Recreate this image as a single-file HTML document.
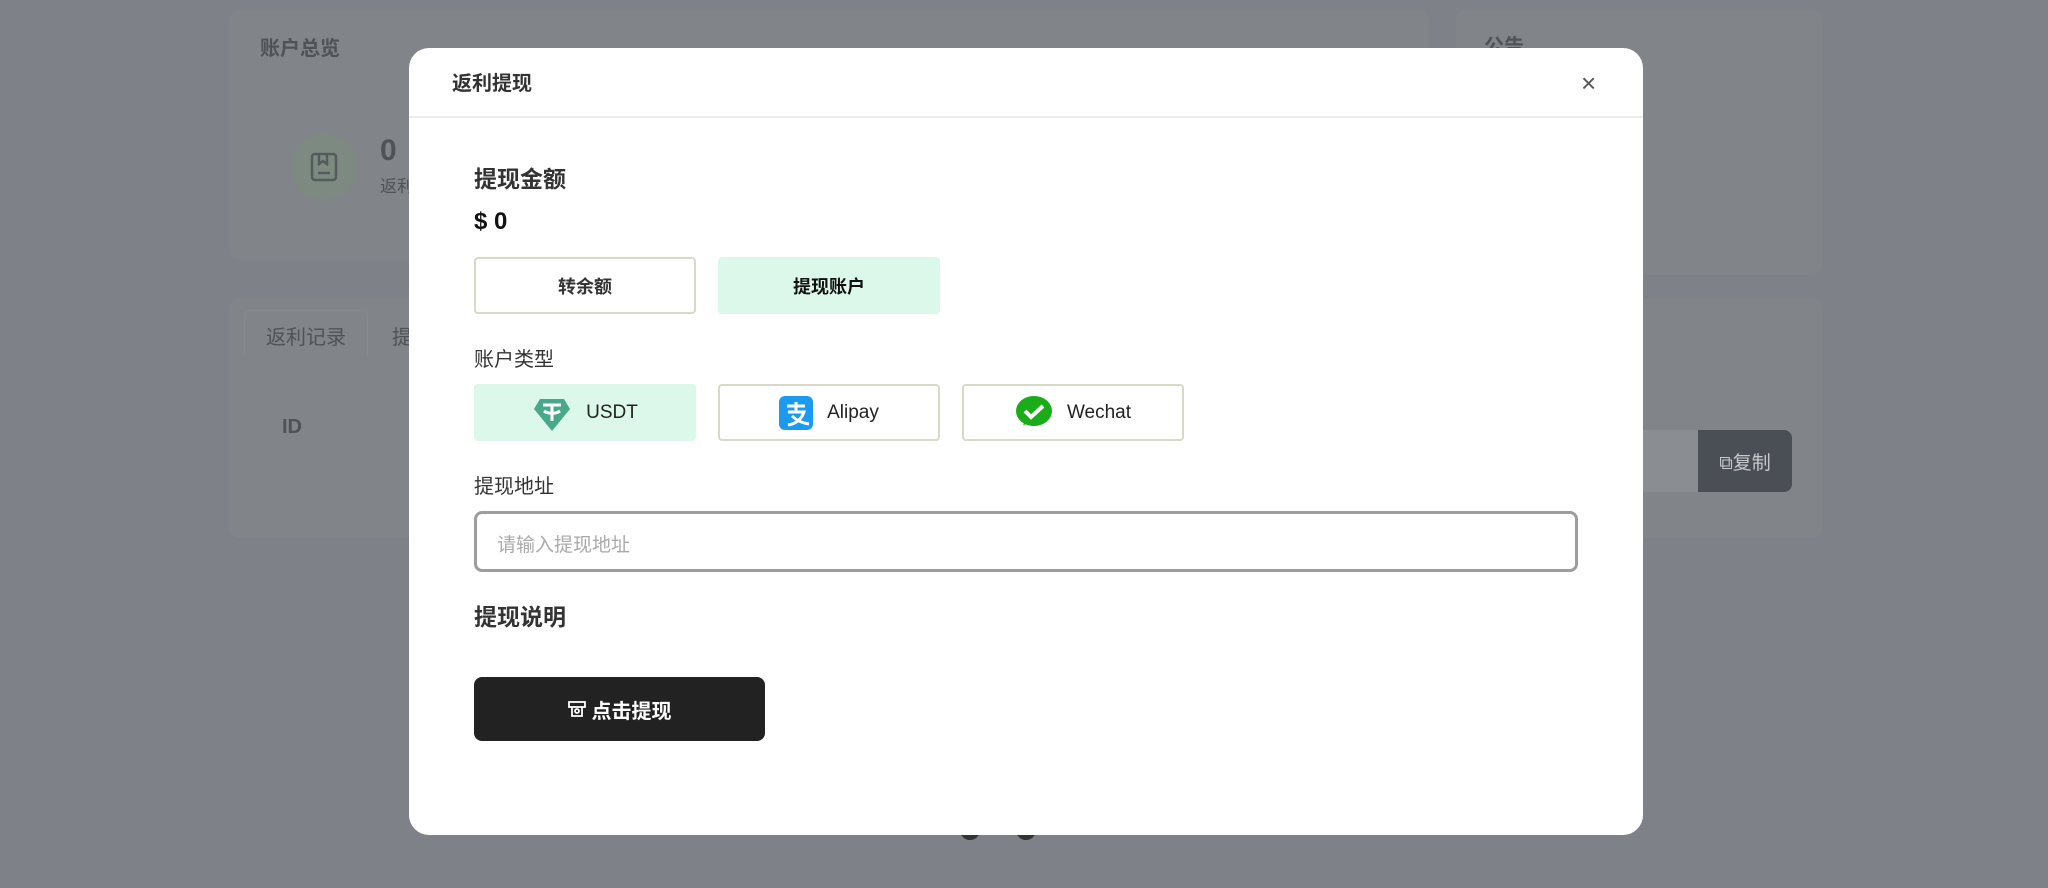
<!DOCTYPE html>
<html><head><meta charset="utf-8"><style>
*{box-sizing:border-box;margin:0;padding:0}
body{width:2048px;height:888px;overflow:hidden;background:#7e8188;font-family:"Liberation Sans","Noto Sans CJK SC",sans-serif;position:relative}
.abs{position:absolute}
.card{position:absolute;background:#818489;border-radius:10px}
.bgt{position:absolute;color:#4f5257;font-size:20px}
.modal{position:absolute;left:409px;top:48px;width:1234px;height:787px;background:#fff;border-radius:20px}
.hd{position:absolute;left:0;top:0;width:100%;height:70px;border-bottom:2px solid #ececec}
.btn{position:absolute;height:57px;width:222px;border-radius:4px;display:flex;align-items:center;justify-content:center;font-size:18px;font-weight:bold;color:#333}
.out{border:2px solid #d9d9c8;background:#fff}
.sel{background:#dcf8ea;border:none}
.m{font-weight:normal;font-size:19px;gap:14px;color:#222}
</style></head><body>
<div class="card" style="left:229px;top:10px;width:1200px;height:250px"></div>
<div class="card" style="left:1456px;top:10px;width:366px;height:265px"></div>
<div class="card" style="left:229px;top:298px;width:1593px;height:240px"></div>
<div class="bgt" style="left:260px;top:32px;font-weight:bold">账户总览</div>
<div class="bgt" style="left:1484px;top:30px;font-weight:bold">公告</div>
<div class="abs" style="left:291px;top:134px;width:66px;height:66px;border-radius:50%;background:#7d8a81"></div>
<svg class="abs" style="left:310px;top:152px" width="28" height="30" viewBox="0 0 28 30" fill="none" stroke="#555a5c" stroke-width="2.5"><rect x="2" y="2" width="24" height="26" rx="3"/><path d="M9 2v10l4-3 4 3V2M8 21h12"/></svg>
<div class="bgt" style="left:380px;top:134px;font-size:30px;font-weight:bold">0</div>
<div class="bgt" style="left:380px;top:172px;font-size:17px">返利</div>
<div class="abs" style="left:244px;top:310px;width:124px;height:46px;border:1px solid #878a8f;border-bottom:none;border-radius:6px 6px 0 0"></div>
<div class="bgt" style="left:266px;top:321px">返利记录</div>
<div class="bgt" style="left:392px;top:321px">提</div>
<div class="bgt" style="left:282px;top:416px;font-weight:bold">ID</div>
<div class="abs" style="left:1600px;top:430px;width:100px;height:62px;background:#8a8d92"></div>
<div class="abs" style="left:1698px;top:430px;width:94px;height:62px;background:#4a4e55;border-radius:0 8px 8px 0;color:#c8c9cc;font-size:19px;display:flex;align-items:center;justify-content:center">⧉复制</div>
<div class="abs" style="left:960px;top:820px;width:20px;height:20px;border-radius:50%;background:#333"></div>
<div class="abs" style="left:1016px;top:820px;width:20px;height:20px;border-radius:50%;background:#333"></div>

<div class="modal">
<div class="hd"><div class="abs" style="left:43px;top:19px;font-size:20px;font-weight:bold;color:#333">返利提现</div>
<div class="abs" style="left:1172px;top:20px;font-size:26px;color:#555">×</div></div>
<div class="abs" style="left:65px;top:112px;font-size:23px;font-weight:bold;color:#333">提现金额</div>
<div class="abs" style="left:65px;top:160px;font-size:24px;font-weight:bold;color:#111">$ 0</div>
<div class="btn out" style="left:65px;top:209px">转余额</div>
<div class="btn sel" style="left:309px;top:209px;color:#111">提现账户</div>
<div class="abs" style="left:65px;top:295px;font-size:20px;color:#333">账户类型</div>
<div class="btn sel m" style="left:65px;top:336px"><svg width="40" height="40" viewBox="0 0 40 40"><path d="M8 6h24l6 10-18 22L2 16z" fill="#4aa88a"/><path d="M11 12h18M20 12v16M12 18c4 3 12 3 16 0" stroke="#fff" stroke-width="3" fill="none"/></svg>USDT</div>
<div class="btn out m" style="left:309px;top:336px"><svg width="34" height="34" viewBox="0 0 34 34"><rect width="34" height="34" rx="6" fill="#1a9bf0"/><path d="M8 10h18M17 6v10M9 16h16c-3 8-9 12-16 13M13 20c4 4 10 7 17 8" stroke="#fff" stroke-width="3" fill="none"/></svg>Alipay</div>
<div class="btn out m" style="left:553px;top:336px"><svg width="38" height="36" viewBox="0 0 38 36"><ellipse cx="19" cy="16" rx="18" ry="15" fill="#1aad19"/><path d="M8 30l4-7 6 5z" fill="#1aad19"/><path d="M10 16l6 6 12-11" stroke="#fff" stroke-width="4" fill="none"/></svg>Wechat</div>
<div class="abs" style="left:65px;top:422px;font-size:20px;color:#333">提现地址</div>
<div class="abs" style="left:65px;top:463px;width:1104px;height:61px;border:3px solid #9d9d9d;border-radius:8px;font-size:19px;color:#aaa;padding:16px 20px">请输入提现地址</div>
<div class="abs" style="left:65px;top:550px;font-size:23px;font-weight:bold;color:#333">提现说明</div>
<div class="abs" style="left:65px;top:629px;width:291px;height:64px;background:#222;border-radius:8px;color:#fff;font-size:20px;font-weight:bold;display:flex;align-items:center;justify-content:center;gap:6px"><svg width="18" height="18" viewBox="0 0 18 18" fill="none" stroke="#fff" stroke-width="1.8"><rect x="1" y="2" width="16" height="5"/><path d="M4 7v9h10V7"/><circle cx="9" cy="11" r="2"/></svg>点击提现</div>
</div>
</body></html>
